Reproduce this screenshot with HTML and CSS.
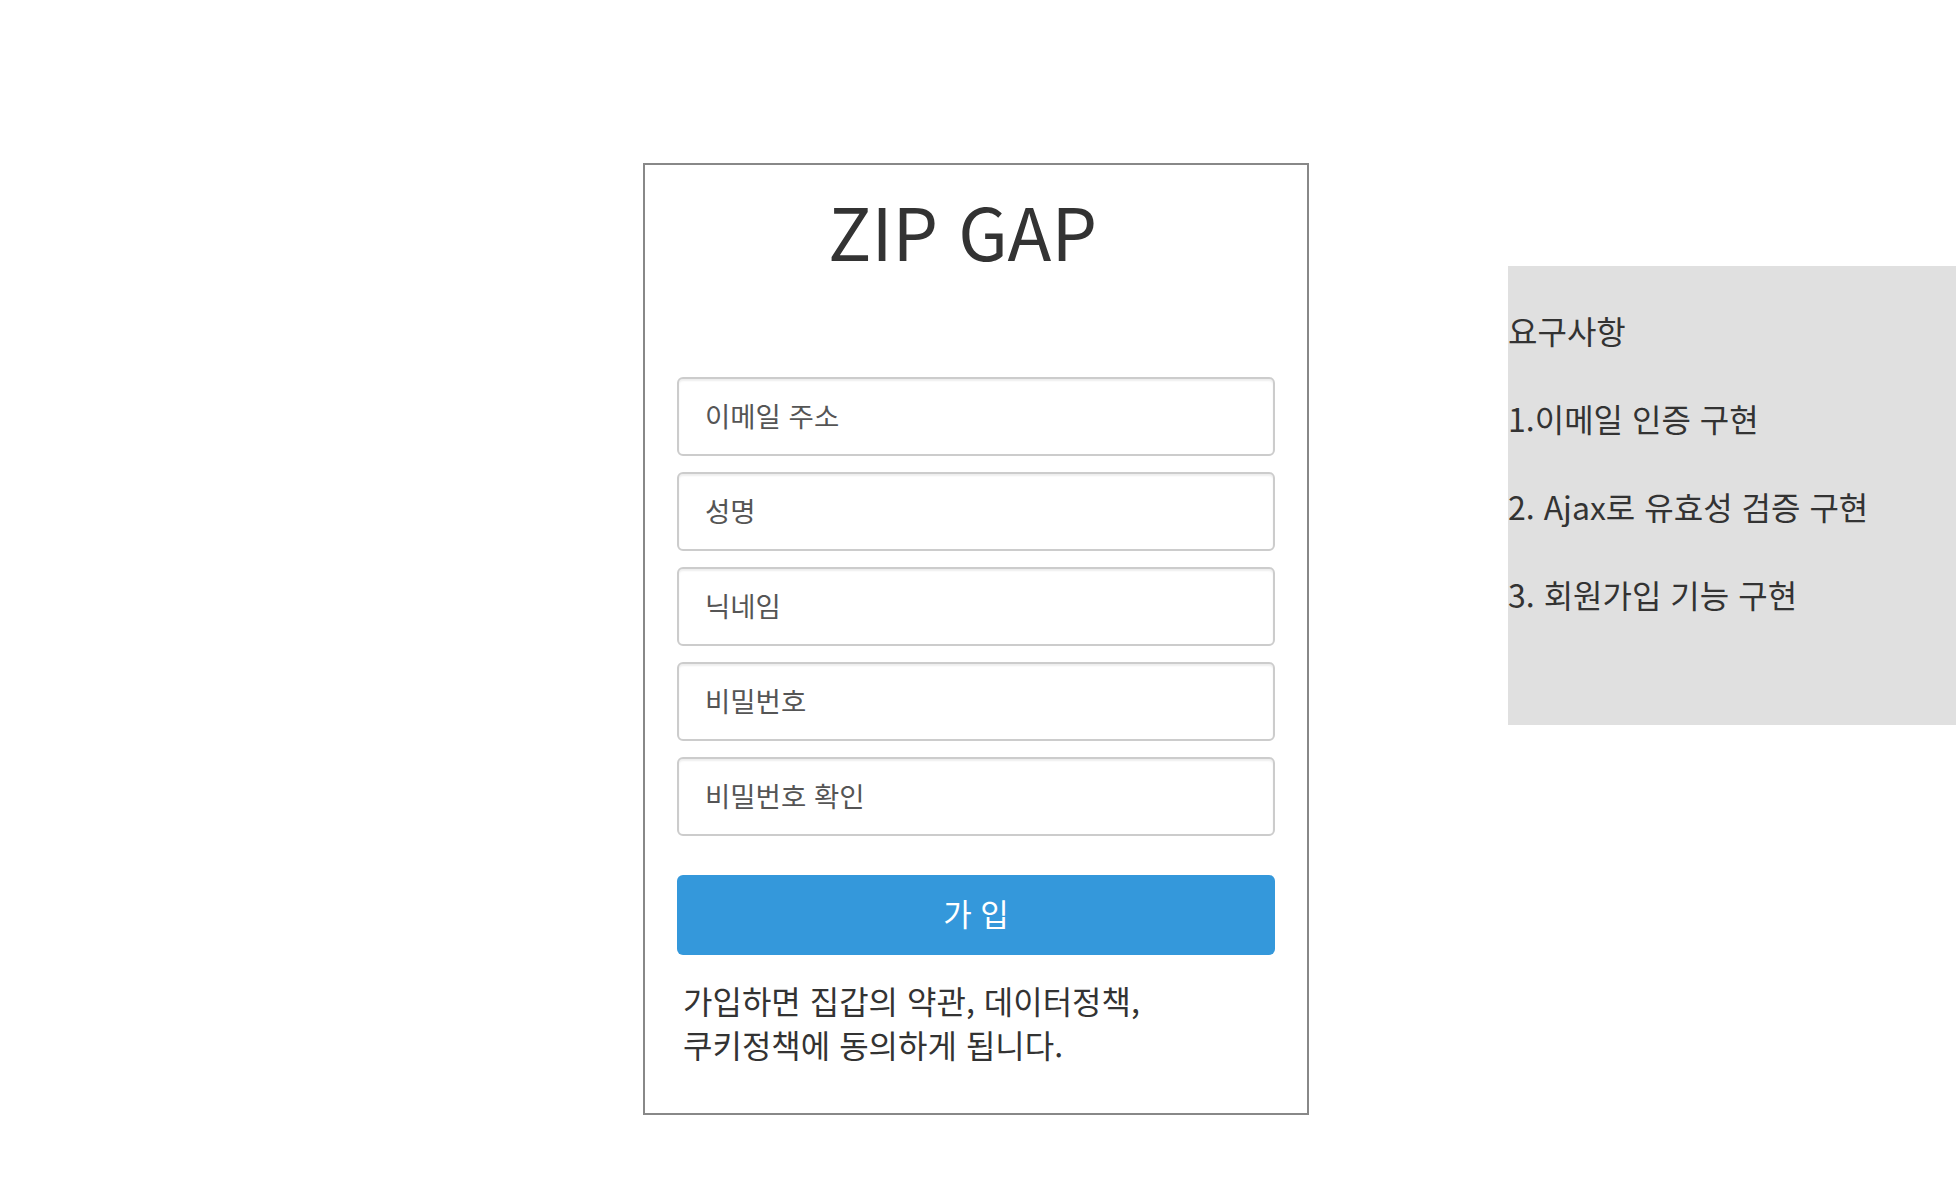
FILE: index.html
```html
<!DOCTYPE html>
<html lang="ko">
<head>
<meta charset="utf-8">
<title>ZIP GAP 회원가입</title>
<link rel="stylesheet" href="styles.css">
</head>
<body>
<div class="page">
  <div class="card">
    <h1 class="logo">ZIP GAP</h1>
    <form class="form">
      <input class="field" type="email" placeholder="이메일 주소">
      <input class="field" type="text" placeholder="성명">
      <input class="field" type="text" placeholder="닉네임">
      <input class="field" type="password" placeholder="비밀번호">
      <input class="field" type="password" placeholder="비밀번호 확인">
      <button class="submit" type="button">가 입</button>
    </form>
    <p class="terms">가입하면 집갑의 약관, 데이터정책,<br>쿠키정책에 동의하게 됩니다.</p>
  </div>
  <aside class="notes">
    <p class="note">요구사항</p>
    <p class="note">1.이메일 인증 구현</p>
    <p class="note">2. Ajax로 유효성 검증 구현</p>
    <p class="note">3. 회원가입 기능 구현</p>
  </aside>
</div>
</body>
</html>
```

FILE: styles.css
```css
* { box-sizing: border-box; }

html, body {
  margin: 0;
  padding: 0;
  background: #ffffff;
}

body {
  font-family: "Noto Sans CJK KR", "Noto Sans", sans-serif;
  color: #333333;
}

.page {
  display: flex;
  align-items: flex-start;
  padding: 163px 0 0 643px;
}

.card {
  width: 666px;
  flex: none;
  border: 2px solid #888888;
  padding: 13px 32px 0 32px;
  height: 952px;
}

.logo {
  margin: 0 0 95px 0;
  padding-right: 27px;
  font-size: 72px;
  line-height: 104px;
  font-weight: 400;
  text-align: center;
  color: #333333;
}

.form {
  display: flex;
  flex-direction: column;
  gap: 16px;
}

.field {
  height: 79px;
  width: 100%;
  border: 2px solid #cccccc;
  border-radius: 6px;
  box-shadow: inset 0 2px 2px rgba(0, 0, 0, 0.07);
  padding: 0 20px 3px 26px;
  font-family: inherit;
  font-size: 27.5px;
  color: #555555;
  background: #ffffff;
  outline: none;
}

.field::placeholder {
  color: #555555;
  opacity: 1;
}

.submit {
  margin-top: 23px;
  height: 80px;
  width: 100%;
  border: none;
  border-radius: 6px;
  background: #3498db;
  color: #ffffff;
  font-family: inherit;
  font-size: 31px;
  line-height: 1;
  padding: 0 0 6px 0;
  cursor: pointer;
}

.terms {
  margin: 23px 0 0 6px;
  font-size: 32px;
  line-height: 44px;
  color: #333333;
}

.notes {
  flex: none;
  margin: 103px 0 0 199px;
  width: 448px;
  height: 459px;
  background: #e0e0e0;
  padding-top: 42px;
}

.note {
  margin: 0 0 44px 0;
  font-size: 32px;
  line-height: 44px;
  color: #333333;
}
```
